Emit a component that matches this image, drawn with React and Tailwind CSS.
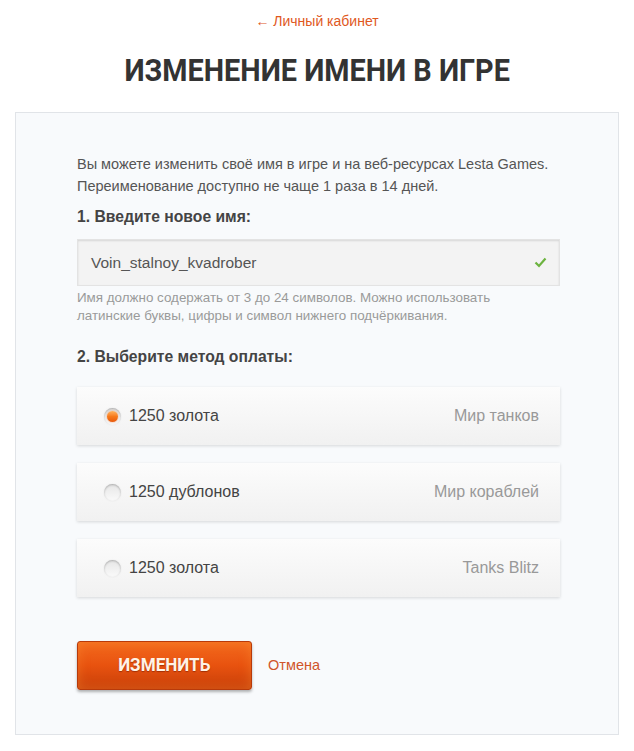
const options = [
    { amount: "1250 золота", game: "Мир танков", checked: true },
    { amount: "1250 дублонов", game: "Мир кораблей", checked: false },
    { amount: "1250 золота", game: "Tanks Blitz", checked: false },
];

const Radio = ({ checked }) => (
    <span className="flex h-[17px] w-[17px] shrink-0 items-center justify-center rounded-full bg-gradient-to-b from-[#e6e6e6] to-[#fafafa] shadow-[inset_0_1px_2px_rgba(0,0,0,0.25),0_0_2px_rgba(0,0,0,0.08)]">
        {checked && (
            <span className="h-[11px] w-[11px] rounded-full bg-gradient-to-b from-[#ffb25a] via-[#f77a1a] to-[#e8590c] shadow-[0_0_2px_rgba(230,90,10,0.6)]" />
        )}
    </span>
);

const App = () => (
    <div className="min-h-[751px] bg-white font-['Liberation_Sans',Arial,sans-serif]">
        <div className="pt-[9px] text-center">
            <a href="#" className="text-[14px] leading-4 text-[#e0581e]">
                ← Личный кабинет
            </a>
        </div>
        <h1 className="mt-[19px] text-center font-['Roboto',sans-serif] text-[32px] font-bold leading-9 text-[#333]">
            <span className="inline-block scale-x-[0.9]">ИЗМЕНЕНИЕ ИМЕНИ В ИГРЕ</span>
        </h1>

        <section className="mx-[15px] mt-[24px] border border-[#e1e4e8] bg-[#f8fafc] pb-[44px] pl-[61px] pr-[58px] pt-[40px]">
            <p className="text-[14.5px] leading-[22px] text-[#555]">
                Вы можете изменить своё имя в игре и на веб-ресурсах Lesta Games.
                <br />
                Переименование доступно не чаще 1 раза в 14 дней.
            </p>

            <h2 className="mt-[10px] text-[15.7px] font-bold leading-5 text-[#444]">1. Введите новое имя:</h2>

            <div className="mt-[12px] flex h-[47px] items-center justify-between border border-[#e3e3e3] bg-[#f3f3f3] pl-[13px] pr-[12px] shadow-[inset_0_1px_2px_rgba(0,0,0,0.12)]">
                <span className="text-[15.5px] text-[#555]">Voin_stalnoy_kvadrober</span>
                <svg width="13" height="11" viewBox="0 0 13 11">
                    <path d="M1.5 5.5 L5 9 L11.5 1.5" fill="none" stroke="#6cb33f" strokeWidth="2.2" />
                </svg>
            </div>
            <p className="mt-[3px] text-[13.4px] leading-[18px] text-[#9a9a9a]">
                Имя должно содержать от 3 до 24 символов. Можно использовать
                <br />
                латинские буквы, цифры и символ нижнего подчёркивания.
            </p>

            <h2 className="mt-[22px] text-[15.7px] font-bold leading-5 text-[#444]">2. Выберите метод оплаты:</h2>

            <div className="mt-[20px] flex flex-col gap-[18px]">
                {options.map((option) => (
                    <label
                        key={option.game}
                        className="flex h-[58px] cursor-pointer items-center justify-between bg-gradient-to-b from-[#fcfcfc] to-[#f1f1f1] pl-[27px] pr-[21px] shadow-[0_1px_3px_rgba(0,0,0,0.14)]"
                    >
                        <span className="flex items-center gap-[8px] text-[16px] text-[#444]">
                            <Radio checked={option.checked} />
                            {option.amount}
                        </span>
                        <span className="text-[16px] text-[#999]">{option.game}</span>
                    </label>
                ))}
            </div>

            <div className="mt-[44px] flex items-center gap-[16px]">
                <button className="h-[49px] w-[175px] rounded-[3px] border border-[#b83a0a] bg-gradient-to-b from-[#f36a1d] via-[#e8520f] to-[#c8400a] font-['Roboto',sans-serif] text-[19px] font-bold text-[#fff3e6] shadow-[0_2px_3px_rgba(0,0,0,0.3),inset_0_0_12px_rgba(255,160,60,0.35)] [text-shadow:0_1px_1px_rgba(120,30,0,0.6)]">
                    <span className="inline-block scale-x-[0.9]">ИЗМЕНИТЬ</span>
                </button>
                <a href="#" className="text-[14.5px] text-[#d0552a]">
                    Отмена
                </a>
            </div>
        </section>
    </div>
);

export default App;
